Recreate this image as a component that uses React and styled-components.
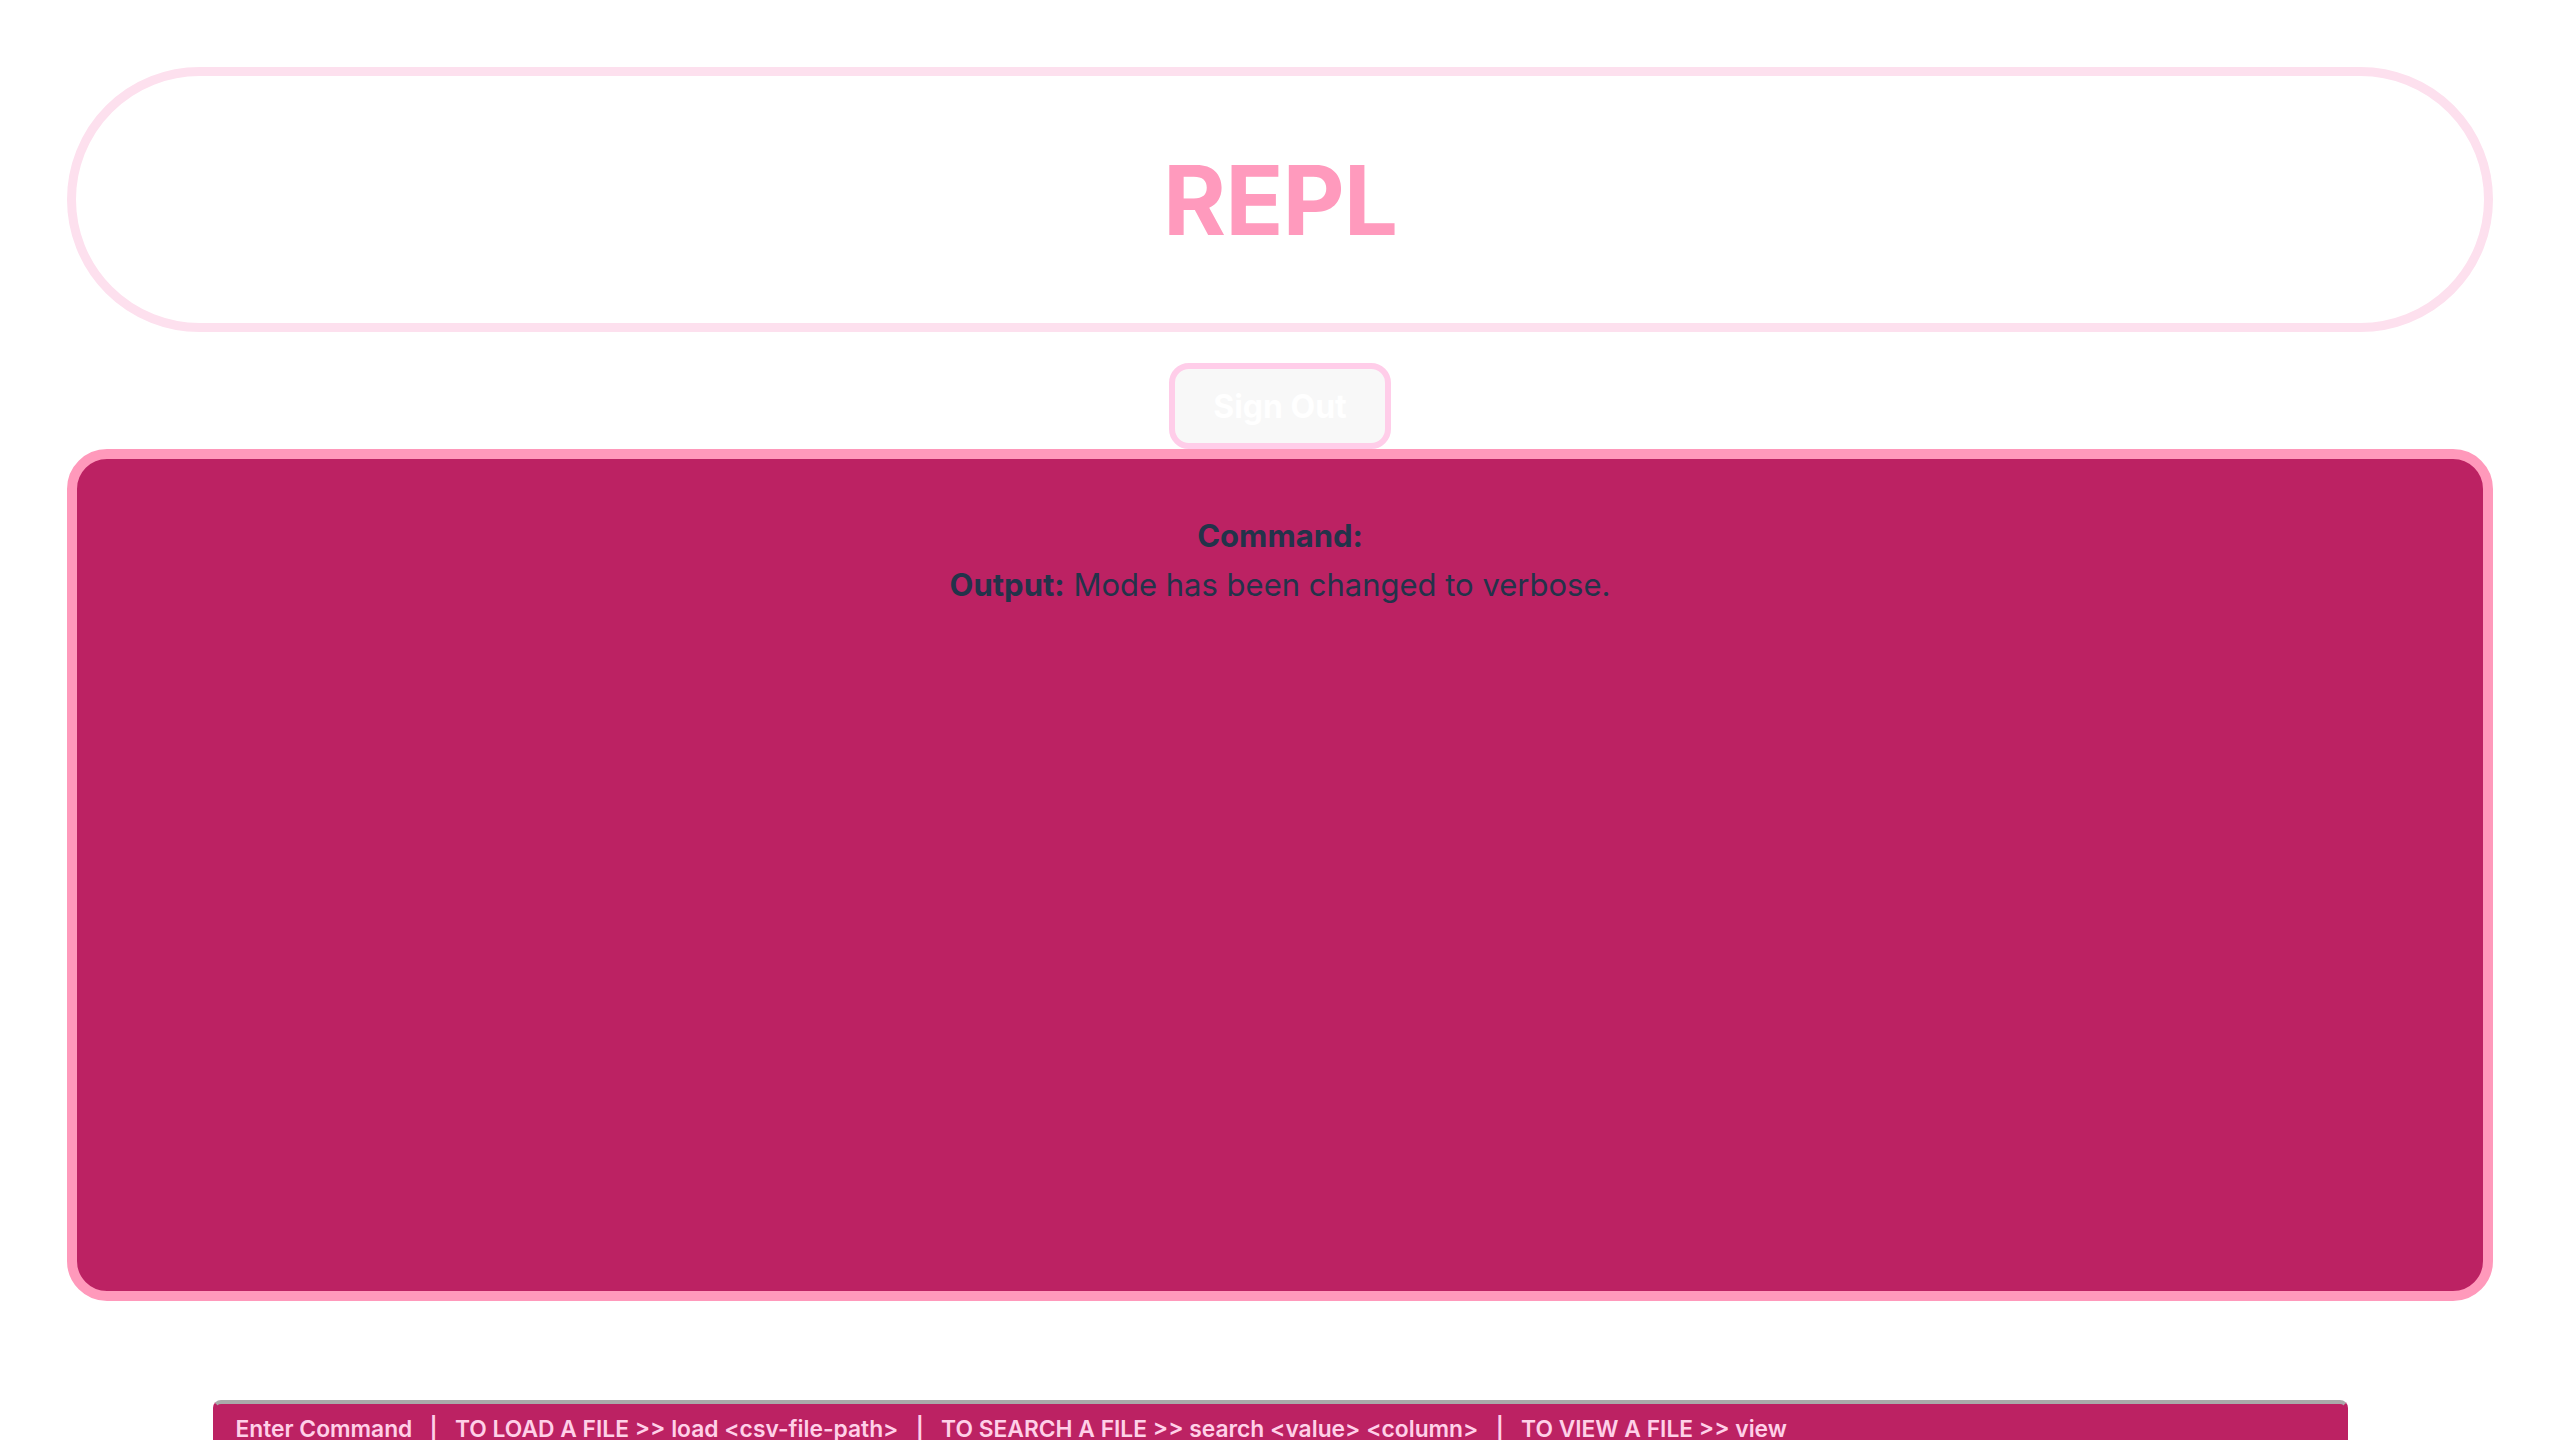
import React from 'react';
import styled, { createGlobalStyle } from 'styled-components';

// pink = "#ff99bb";
// berry = "#bc2263";
// blush = "#fde0ee";

const GlobalStyle = createGlobalStyle`
  html, body {
    margin: 0;
    padding: 0;
    background: #ffffff;
    overflow: hidden;
  }
  body {
    font-family: Inter, "Noto Sans", sans-serif;
  }
`;

const StyledPage = styled.div`
  box-sizing: border-box;
  width: 100vw;
  height: 100vh;
  overflow: hidden;
  padding: 67px 67px 0;
  display: flex;
  flex-direction: column;
  align-items: center;
`;

const StyledHeader = styled.header`
  box-sizing: border-box;
  width: 100%;
  height: 265px;
  flex-shrink: 0;
  border: 9px solid #fde0ee;
  border-radius: 140px;
  display: flex;
  justify-content: center;
  align-items: center;
`;

const StyledH1 = styled.h1`
  margin: 0;
  font-size: 96px;
  font-weight: 700;
  color: #ff9abd;
  letter-spacing: -1px;
`;

const StyledSignOut = styled.button`
  box-sizing: border-box;
  margin-top: 31px;
  width: 222px;
  height: 86px;
  flex-shrink: 0;
  border: 6px solid #ffcde9;
  border-radius: 20px;
  background: #f8f8f8;
  color: #ffffff;
  font-family: Inter, "Noto Sans", sans-serif;
  font-size: 32px;
  font-weight: 700;
  cursor: pointer;
`;

const StyledHistory = styled.section`
  box-sizing: border-box;
  width: 100%;
  height: 852px;
  flex-shrink: 0;
  border: 10px solid #ff99bb;
  border-radius: 40px;
  background: #bc2263;
  padding-top: 52px;
  color: #23334a;
  text-align: center;
  font-size: 31px;
  line-height: 49px;
`;

const StyledLine = styled.div`
  margin: 0;
`;

const StyledLabel = styled.b`
  font-weight: 700;
`;

const StyledInput = styled.input`
  box-sizing: border-box;
  margin-top: 99px;
  width: 2135px;
  height: 80px;
  flex-shrink: 0;
  border: 3px solid #bc2263;
  border-top: 4px solid #aaaaaa;
  border-radius: 8px;
  background: #bc2263;
  padding: 0 20px 24px;
  font-family: Inter, "Noto Sans", sans-serif;
  font-size: 22.8px;
  font-weight: 600;
  color: #ffd0e8;
  outline: none;

  &::placeholder {
    color: #ffd0e8;
    opacity: 1;
  }
`;

const sep = '\u00a0\u00a0\u00a0|\u00a0\u00a0\u00a0';
const hint =
  'Enter Command' + sep +
  'TO LOAD A FILE >> load <csv-file-path>' + sep +
  'TO SEARCH A FILE >> search <value> <column>' + sep +
  'TO VIEW A FILE >> view';

function App() {
  return (
    <StyledPage>
      <GlobalStyle />
      <StyledHeader>
        <StyledH1>REPL</StyledH1>
      </StyledHeader>
      <StyledSignOut>Sign Out</StyledSignOut>
      <StyledHistory>
        <StyledLine>
          <StyledLabel>Command:</StyledLabel>
        </StyledLine>
        <StyledLine>
          <StyledLabel>Output:</StyledLabel> Mode has been changed to verbose.
        </StyledLine>
      </StyledHistory>
      <StyledInput type="text" placeholder={hint} />
    </StyledPage>
  );
}

export default App;
